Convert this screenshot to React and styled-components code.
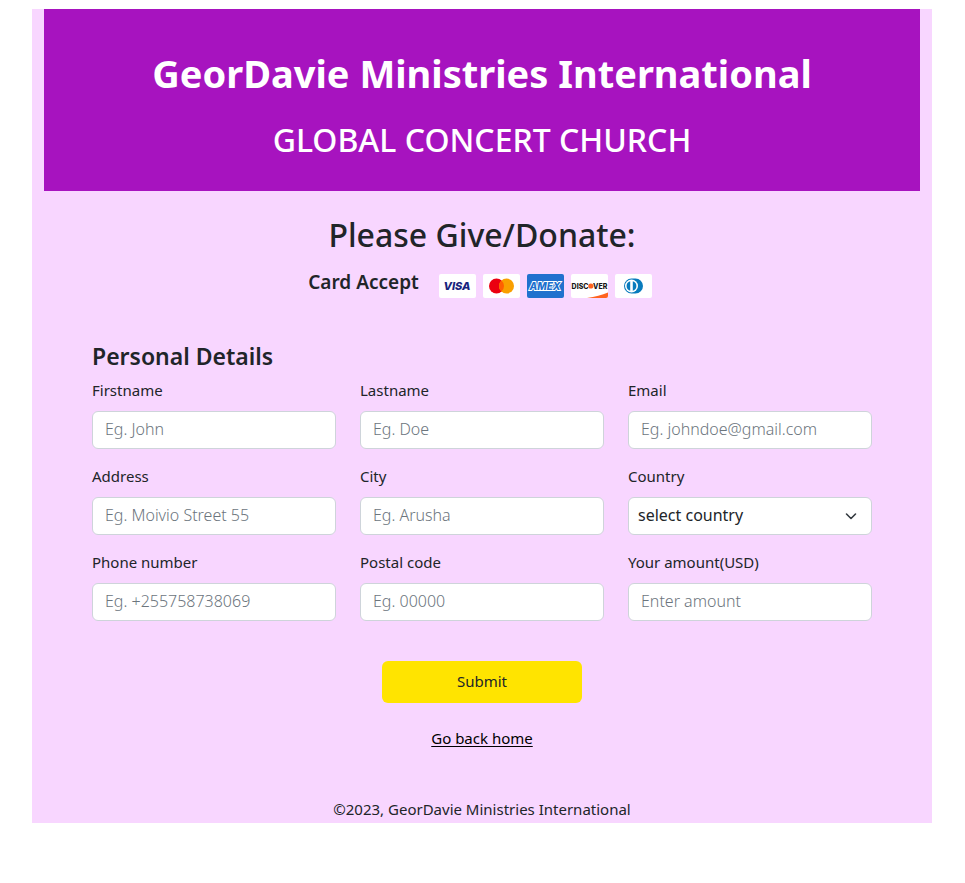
import React from "react";
import styled, { createGlobalStyle } from "styled-components";

const GlobalStyle = createGlobalStyle`
  *, *::before, *::after { box-sizing: border-box; }
  body {
    margin: 0;
    padding-right: 1px;
    background: #fff;
    color: #212529;
    font-family: "Noto Sans", "Open Sans", sans-serif;
    font-size: 15px;
    line-height: 24px;
  }
  h1, h2, h3, p { margin: 0; }
`;

const Page = styled.main`
  max-width: 900px;
  margin: 9px auto 60px;
  padding: 0 12px;
  background: #f8d6ff;
`;

const Banner = styled.header`
  padding: 40px 12px 32px;
  background: #a713bf;
  color: #fff;
  text-align: center;
`;

const ChurchName = styled.h1`
  margin-bottom: 24px;
  font-size: 38px;
  line-height: 48px;
  font-weight: 700;
`;

const Tagline = styled.p`
  font-size: 32px;
  line-height: 38px;
  font-weight: 500;
`;

const Intro = styled.section`
  padding-top: 25px;
  text-align: center;
`;

const IntroTitle = styled.h2`
  font-size: 32px;
  line-height: 38px;
  font-weight: 500;
`;

const CardRow = styled.div`
  display: flex;
  justify-content: center;
  align-items: flex-start;
  gap: 20px;
  margin-top: 16px;
  padding-right: 4px;
`;

const CardLabel = styled.p`
  font-size: 19px;
  line-height: 24px;
  font-weight: 600;
`;

const CardList = styled.div`
  display: flex;
  gap: 7px;
  padding-top: 4px;
`;

const CardIcon = styled.svg`
  display: block;
  width: 37px;
  height: 24px;
`;

const CardBrand = styled.text`
  font-family: Inter, "Open Sans", sans-serif;
  font-size: ${({ $size }) => $size}px;
  font-weight: 800;
  font-style: ${({ $italic }) => ($italic ? "italic" : "normal")};
`;

const DonateForm = styled.form`
  padding: 44px 48px 0;
`;

const FormTitle = styled.h3`
  margin-bottom: 8px;
  font-size: 23px;
  line-height: 29px;
  font-weight: 600;
`;

const FieldGrid = styled.div`
  display: grid;
  grid-template-columns: repeat(3, minmax(0, 1fr));
  gap: 16px 24px;
`;

const Field = styled.div`
  display: flex;
  flex-direction: column;
  gap: 10px;
`;

const Label = styled.label`
  line-height: 22px;
`;

const Input = styled.input`
  width: 100%;
  height: 38px;
  padding: 0 12px 2px;
  border: 1px solid #ced4da;
  border-radius: 6px;
  background: #fff;
  color: #212529;
  font: inherit;
  font-size: 16px;
  font-weight: 300;
  &::placeholder { color: #6c757d; opacity: 1; }
`;

const SelectWrap = styled.div`
  display: grid;
  align-items: center;
  & > * { grid-area: 1 / 1; }
`;

const Select = styled.select`
  appearance: none;
  width: 100%;
  height: 38px;
  padding: 0 36px 2px 9px;
  border: 1px solid #ced4da;
  border-radius: 6px;
  background: #fff;
  color: #212529;
  font: inherit;
  font-size: 16px;
`;

const Chevron = styled.svg`
  justify-self: end;
  width: 12px;
  height: 12px;
  margin-right: 15px;
  pointer-events: none;
`;

const Actions = styled.div`
  display: flex;
  flex-direction: column;
  align-items: center;
  gap: 24px;
  margin-top: 40px;
`;

const SubmitButton = styled.button`
  width: 200px;
  height: 42px;
  padding: 0 12px 2px;
  border: 0;
  border-radius: 6px;
  background: #ffe400;
  color: #212529;
  font: inherit;
  cursor: pointer;
`;

const HomeLink = styled.a`
  color: #000;
  line-height: 22px;
  text-decoration: underline;
  text-underline-offset: 2px;
`;

const Footer = styled.footer`
  padding: 48px 0 2px;
  text-align: center;
`;

const fields = [
  { id: "firstname", label: "Firstname", placeholder: "Eg. John" },
  { id: "lastname", label: "Lastname", placeholder: "Eg. Doe" },
  { id: "email", label: "Email", placeholder: "Eg. johndoe@gmail.com", type: "email" },
  { id: "address", label: "Address", placeholder: "Eg. Moivio Street 55" },
  { id: "city", label: "City", placeholder: "Eg. Arusha" },
  { id: "country", label: "Country", options: ["select country"] },
  { id: "phone", label: "Phone number", placeholder: "Eg. +255758738069", type: "tel" },
  { id: "postal", label: "Postal code", placeholder: "Eg. 00000" },
  { id: "amount", label: "Your amount(USD)", placeholder: "Enter amount" },
];

function Cards() {
  return (
    <CardList>
      <CardIcon viewBox="0 0 37 24" role="img" aria-label="Visa">
        <rect width="37" height="24" rx="2" fill="#fff" />
        <CardBrand $size={11} $italic x="18" y="16" textAnchor="middle" fill="#17237d">VISA</CardBrand>
      </CardIcon>
      <CardIcon viewBox="0 0 37 24" role="img" aria-label="Mastercard">
        <rect width="37" height="24" rx="2" fill="#fff" />
        <circle cx="13.500" cy="12" r="7.500" fill="#eb0010" />
        <circle cx="23.500" cy="12" r="7.500" fill="#f99f00" />
        <path d="M18.500 6.400a7.500 7.500 0 0 1 0 11.200 7.500 7.500 0 0 1 0-11.200z" fill="#ff5f00" />
      </CardIcon>
      <CardIcon viewBox="0 0 37 24" role="img" aria-label="American Express">
        <rect width="37" height="24" rx="2" fill="#2171ce" />
        <CardBrand $size={10} $italic x="18" y="15.500" textAnchor="middle" fill="#2171ce" stroke="#fff" strokeWidth="1.800" paintOrder="stroke">AMEX</CardBrand>
      </CardIcon>
      <CardIcon viewBox="0 0 37 24" role="img" aria-label="Discover">
        <rect width="37" height="24" rx="2" fill="#fff" />
        <path d="M16 24c8-1.200 15-2.800 21-5.500V22a2 2 0 0 1-2 2z" fill="#ff6320" />
        <CardBrand $size={7} x="17.500" y="14.500" textAnchor="end" fill="#171717">DISC</CardBrand>
        <CardBrand $size={7} x="22" y="14.500" fill="#171717">VER</CardBrand>
        <circle cx="19.800" cy="12" r="2.600" fill="#ff6320" />
      </CardIcon>
      <CardIcon viewBox="0 0 37 24" role="img" aria-label="Diners Club">
        <rect width="37" height="24" rx="2" fill="#fff" />
        <path d="M16.500 4.500h4a7.500 7.500 0 0 1 0 15h-4a7.500 7.500 0 0 1 0-15z" fill="#087bbd" />
        <circle cx="16.500" cy="12" r="6.500" fill="#fff" />
        <path d="M15.200 7.200a5 5 0 0 0 0 9.600zM17.800 7.200a5 5 0 0 1 0 9.600z" fill="#087bbd" />
      </CardIcon>
    </CardList>
  );
}

export default function App() {
  return (
    <>
      <GlobalStyle />
      <Page>
        <Banner>
          <ChurchName>GeorDavie Ministries International</ChurchName>
          <Tagline>GLOBAL CONCERT CHURCH</Tagline>
        </Banner>
        <Intro>
          <IntroTitle>Please Give/Donate:</IntroTitle>
          <CardRow>
            <CardLabel>Card Accept</CardLabel>
            <Cards />
          </CardRow>
        </Intro>
        <DonateForm onSubmit={(event) => event.preventDefault()}>
          <FormTitle>Personal Details</FormTitle>
          <FieldGrid>
            {fields.map(({ id, label, placeholder, options, type = "text" }) => (
              <Field key={id}>
                <Label htmlFor={id}>{label}</Label>
                {options ? (
                  <SelectWrap>
                    <Select id={id}>
                      {options.map((option) => (
                        <option key={option}>{option}</option>
                      ))}
                    </Select>
                    <Chevron viewBox="0 0 12 12" aria-hidden="true">
                      <path d="M1.500 4 6 8.500 10.500 4" fill="none" stroke="#343a40" strokeWidth="1.600" strokeLinecap="round" strokeLinejoin="round" />
                    </Chevron>
                  </SelectWrap>
                ) : (
                  <Input id={id} type={type} placeholder={placeholder} />
                )}
              </Field>
            ))}
          </FieldGrid>
          <Actions>
            <SubmitButton type="submit">Submit</SubmitButton>
            <HomeLink href="#home">Go back home</HomeLink>
          </Actions>
        </DonateForm>
        <Footer>©2023, GeorDavie Ministries International</Footer>
      </Page>
    </>
  );
}
